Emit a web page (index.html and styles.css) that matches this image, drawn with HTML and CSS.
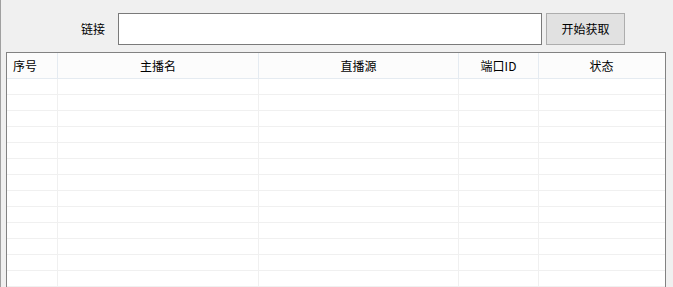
FILE: index.html
```html
<!DOCTYPE html>
<html lang="zh">
<head>
<meta charset="utf-8">
<title>获取</title>
<link rel="stylesheet" href="styles.css">
</head>
<body>
<div class="window">
  <div class="toolbar">
    <label class="label" for="url">链接</label>
    <input class="url" id="url" type="text">
    <button class="btn" type="button">开始获取</button>
  </div>
  <div class="list">
    <div class="row head">
      <div class="cell first">序号</div>
      <div class="cell">主播名</div>
      <div class="cell">直播源</div>
      <div class="cell">端口ID</div>
      <div class="cell">状态</div>
    </div>
    <div class="row"><div class="cell"></div><div class="cell"></div><div class="cell"></div><div class="cell"></div><div class="cell"></div></div>
    <div class="row"><div class="cell"></div><div class="cell"></div><div class="cell"></div><div class="cell"></div><div class="cell"></div></div>
    <div class="row"><div class="cell"></div><div class="cell"></div><div class="cell"></div><div class="cell"></div><div class="cell"></div></div>
    <div class="row"><div class="cell"></div><div class="cell"></div><div class="cell"></div><div class="cell"></div><div class="cell"></div></div>
    <div class="row"><div class="cell"></div><div class="cell"></div><div class="cell"></div><div class="cell"></div><div class="cell"></div></div>
    <div class="row"><div class="cell"></div><div class="cell"></div><div class="cell"></div><div class="cell"></div><div class="cell"></div></div>
    <div class="row"><div class="cell"></div><div class="cell"></div><div class="cell"></div><div class="cell"></div><div class="cell"></div></div>
    <div class="row"><div class="cell"></div><div class="cell"></div><div class="cell"></div><div class="cell"></div><div class="cell"></div></div>
    <div class="row"><div class="cell"></div><div class="cell"></div><div class="cell"></div><div class="cell"></div><div class="cell"></div></div>
    <div class="row"><div class="cell"></div><div class="cell"></div><div class="cell"></div><div class="cell"></div><div class="cell"></div></div>
    <div class="row"><div class="cell"></div><div class="cell"></div><div class="cell"></div><div class="cell"></div><div class="cell"></div></div>
    <div class="row"><div class="cell"></div><div class="cell"></div><div class="cell"></div><div class="cell"></div><div class="cell"></div></div>
    <div class="row"><div class="cell"></div><div class="cell"></div><div class="cell"></div><div class="cell"></div><div class="cell"></div></div>
  </div>
</div>
</body>
</html>
```

FILE: styles.css
```css
html, body {
  margin: 0;
  padding: 0;
  height: 100%;
  overflow: hidden;
  background: #f0f0f0;
}

.window {
  height: 287px;
  width: 673px;
  box-sizing: border-box;
  border-left: 1px solid #a0a0a0;
  font-family: "Noto Sans CJK SC", "Microsoft YaHei", sans-serif;
  font-size: 12px;
  color: #000;
}

.toolbar {
  display: flex;
  align-items: center;
  height: 52px;
  box-sizing: border-box;
  padding-top: 5px;
}

.label {
  margin-left: 80px;
  width: 25px;
  font-size: 12px;
  line-height: 16px;
}

.url {
  margin: 0 0 0 12px;
  width: 424px;
  height: 32px;
  box-sizing: border-box;
  border: 1px solid #7a7a7a;
  background: #fff;
  padding: 0 4px;
  outline: none;
}

.btn {
  margin-left: 4px;
  width: 79px;
  height: 32px;
  box-sizing: border-box;
  border: 1px solid #adadad;
  background: #e1e1e1;
  font-family: inherit;
  font-size: 12px;
  color: #000;
  padding: 0;
  line-height: 16px;
}

.list {
  margin-left: 5px;
  width: 660px;
  height: 240px;
  box-sizing: border-box;
  border: 1px solid #828282;
  border-bottom: none;
  background: #fff;
  overflow: hidden;
}

.row {
  display: grid;
  grid-template-columns: 51px 201px 200px 80px 125px;
  height: 16px;
  box-sizing: border-box;
  border-bottom: 1px solid #f0f0f0;
}

.cell {
  border-right: 1px solid #f0f0f0;
  height: 100%;
  box-sizing: border-box;
}

.row .cell:last-child {
  border-right: none;
}

.row.head {
  height: 26px;
  background: #fcfcfc;
  border-bottom: 1px solid #e5ebf1;
}

.head .cell {
  border-right: 1px solid #e5ebf1;
  text-align: center;
  line-height: 25px;
  font-size: 12px;
}

.head .cell.first {
  text-align: left;
  padding-left: 6px;
}
```
